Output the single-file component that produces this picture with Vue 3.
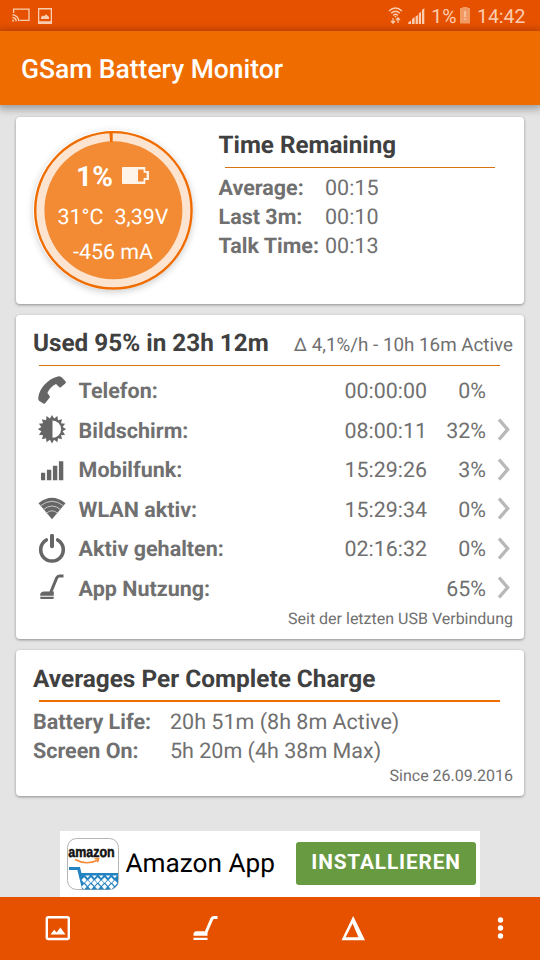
<script setup>
const remaining = [
  { label: 'Average:', value: '00:15' },
  { label: 'Last 3m:', value: '00:10' },
  { label: 'Talk Time:', value: '00:13' },
]
const usage = [
  { icon: 'phone', label: 'Telefon:', time: '00:00:00', pct: '0%', more: false },
  { icon: 'screen', label: 'Bildschirm:', time: '08:00:11', pct: '32%', more: true },
  { icon: 'signal', label: 'Mobilfunk:', time: '15:29:26', pct: '3%', more: true },
  { icon: 'wifi', label: 'WLAN aktiv:', time: '15:29:34', pct: '0%', more: true },
  { icon: 'power', label: 'Aktiv gehalten:', time: '02:16:32', pct: '0%', more: true },
  { icon: 'broom', label: 'App Nutzung:', time: '', pct: '65%', more: true },
]
const averages = [
  { label: 'Battery Life:', value: '20h 51m (8h 8m Active)' },
  { label: 'Screen On:', value: '5h 20m (4h 38m Max)' },
]
const rays = Array.from({ length: 32 }, (_, i) => {
  const r = i % 2 ? 10.8 : 14.2
  const a = (i * Math.PI) / 16
  return `${(14 + r * Math.sin(a)).toFixed(2)},${(14 - r * Math.cos(a)).toFixed(2)}`
}).join(' ')
</script>

<template>
  <div class="screen">
    <div class="status">
      <svg class="cast" width="18" height="15" viewBox="0 0 18 15" fill="none" stroke="#fbcdb0">
        <path d="M1.6 5V1.2H17V12.3H8" stroke-width="1.3" />
        <path d="M.5 6.8a6.7 6.7 0 0 1 6.3 6.5M.5 9.5a4 4 0 0 1 3.7 3.8" stroke-width="1.4" />
        <path d="M.3 11.4a2 2 0 0 1 2 2H.3z" fill="#fbcdb0" stroke="none" />
      </svg>
      <svg class="shot" width="14" height="16" viewBox="0 0 14 16">
        <path fill="#fbcdb0" fill-rule="evenodd" d="M0 0h14v16H0zM1.3 1.4v11.8h11.4V1.4z" />
        <path fill="#fbcdb0" d="M3 11V9l1.7-1.6 1.3.8 2-1.9 1.7 1.5L11 9v2z" />
      </svg>
      <span class="grow"></span>
      <svg class="swifi" width="15" height="17" viewBox="0 0 15 17" fill="none" stroke="#fbcdb0" stroke-width="1.4">
        <path d="M1 4.1Q7.5-2.1 14 4.1M3.2 6.3Q7.5 2.2 11.8 6.3M5.2 8.4Q7.5 6.3 9.8 8.4" />
        <path d="M5 11v5M10 16v-5M3 14l2 2.2L7 14M8 13l2-2.2L12 13" stroke-width="1.2" />
        <circle cx="7.5" cy="9.6" r=".9" fill="#fbcdb0" stroke="none" />
      </svg>
      <svg class="ssig" width="17" height="16" viewBox="0 0 17 16" fill="#fbcdb0">
        <path d="M.3 16v-1.8L3 12.4V16zM4 16v-5l2.6-2V16zM7.6 16V8.6L9.9 7v9zM10.8 16V5.4l2.2-1.6V16zM14 16V1.8L16.3 .2V16z" />
      </svg>
      <span class="sbat-text">1%</span>
      <svg class="sbat" width="10" height="17" viewBox="0 0 10 17">
        <path fill="#f29a64" d="M2.5 1V0h5v1H10v15.5H0V1z" />
        <path fill="#fbcdb0" d="M4.3 4h1.4v6H4.3zM4.3 11.5h1.4V13H4.3z" />
      </svg>
      <span class="clock">14:42</span>
    </div>
    <header class="appbar"><h1>GSam Battery Monitor</h1></header>

    <main class="content">
      <section class="card first">
        <div class="gauge">
          <svg class="dial" width="160" height="160" viewBox="0 0 160 160">
            <circle cx="80.4" cy="80.3" r="78.2" fill="#fce4d0" stroke="#ef6c00" stroke-width="2.4" />
            <circle cx="80.4" cy="80.3" r="69" fill="#f28b34" />
            <path d="M76.3 1.5h3.4V12h-2.600z" fill="#ef6c00" />
          </svg>
          <div class="readout">
            <div class="level">
              <span>1%</span>
              <svg width="27" height="17" viewBox="0 0 27 17">
                <path fill="#fff4ea" fill-rule="evenodd" d="M1 0h22.3v4H27v9h-3.7v4H1a1 1 0 0 1-1-1V1a1 1 0 0 1 1-1zM16 2.6v12h5.6v-3.5h3V5.8h-3V2.6z" />
              </svg>
            </div>
            <div class="temps"><span>31°C</span><span>3,39V</span></div>
            <div class="current">-456 mA</div>
          </div>
        </div>
        <div class="remaining">
          <h2>Time Remaining</h2>
          <div class="rule"></div>
          <div v-for="r in remaining" :key="r.label" class="pair">
            <b>{{ r.label }}</b><span>{{ r.value }}</span>
          </div>
        </div>
      </section>

      <section class="card second">
        <div class="head">
          <h2>Used 95% in 23h 12m</h2>
          <span class="delta">Δ 4,1%/h - 10h 16m Active</span>
        </div>
        <div class="rule"></div>
        <div v-for="u in usage" :key="u.label" class="use">
          <svg class="ico" width="28" height="30" viewBox="0 -.2 28 30">
            <path v-if="u.icon === 'phone'" fill="#666" d="M19.8.3Q22.5-.6 24.2 1.6L27.6 5.2Q28.4 6.4 27.3 7.2L22.8 11Q21.8 11.6 20.8 10.6L18 7.9Q12.5 10.2 9.4 16.9L11.6 19.7Q12.2 20.6 11.5 21.5L7.6 26.6Q6.6 28 5.3 27.2L1 24.5Q0 23.4.3 21.3C1.4 12 9.5 3 19.8.3z" />
            <g v-else-if="u.icon === 'screen'">
              <polygon :points="rays" fill="#666" />
              <path d="M14.500 5.400a8.600 8.600 0 0 1 0 17.200z" fill="#fff" />
            </g>
            <path v-else-if="u.icon === 'signal'" fill="#666" d="M3 17.500h4.200v7.500H3zM8.900 14.500h4.400V25H8.900zM14.900 10.500h4.400V25h-4.400zM20.900 6h4.400V25h-4.400z" />
            <g v-else-if="u.icon === 'wifi'">
              <path d="M14 25L.5 9Q14-2 27.500 9z" fill="#666" />
              <path d="M2.500 11.600Q14 2.500 25.500 11.600M5.400 15.300Q14 8.300 22.600 15.300M8.500 18.900Q14 14.300 19.500 18.900" fill="none" stroke="#c8c8c8" stroke-width="1" />
            </g>
            <g v-else-if="u.icon === 'power'" fill="none" stroke="#666" stroke-linecap="round">
              <path d="M8.300 5.800a11.300 11.300 0 1 0 11.400 0" stroke-width="3.600" />
              <path d="M14 1.500v10.500" stroke-width="4" />
            </g>
            <g v-else>
              <path d="M12.800 19L18.800 4.500Q19.700 2.700 21.500 2.700H25.500" fill="none" stroke="#666" stroke-width="3" />
              <path d="M2.200 22.600V21Q3 18.200 6 18.200H15.800V22.600zM2.200 23.500H15.800V24.800Q15.600 25.800 14.600 25.800H3.400Q2.200 25.700 2.200 24.800z" fill="#666" />
            </g>
          </svg>
          <b>{{ u.label }}</b>
          <span class="time">{{ u.time }}</span>
          <span class="pct">{{ u.pct }}</span>
          <svg v-if="u.more" class="chev" width="14" height="24" viewBox="0 0 14 24">
            <path d="M2 1.500L10.600 11.500L2 21.500" fill="none" stroke="#b8b8b8" stroke-width="3.400" />
          </svg>
        </div>
        <div class="note">Seit der letzten USB Verbindung</div>
      </section>

      <section class="card third">
        <h2>Averages Per Complete Charge</h2>
        <div class="rule thick"></div>
        <div v-for="a in averages" :key="a.label" class="pair">
          <b>{{ a.label }}</b><span>{{ a.value }}</span>
        </div>
        <div class="note">Since 26.09.2016</div>
      </section>
    </main>

    <aside class="ad">
      <svg class="store" width="52" height="52" viewBox="0 0 52 52">
        <defs>
          <clipPath id="tile"><rect x=".5" y=".5" width="51" height="51" rx="9" /></clipPath>
        </defs>
        <rect x=".5" y=".5" width="51" height="51" rx="9" fill="#fff" stroke="#b5b5b5" />
        <text x="1.500" y="19" transform="scale(.83 1)" class="brand">amazon</text>
        <path d="M8 21.500Q19 27.500 30.500 22.200M27.700 20.700L31.600 20.300L30.600 24.200" fill="none" stroke="#f58a35" stroke-width="1.500" />
        <g clip-path="url(#tile)">
          <path d="M2 30.500H11.700L16.700 51" fill="none" stroke="#2484c2" stroke-width="3.200" />
          <path d="M13 35H51V52H16.500z" fill="#2484c2" />
          <g fill="#fff">
            <path v-for="n in 5" :key="'a' + n" :d="`M${11.5 + n * 6.8} 37.500h4.600l-2.300 2.600z`" />
            <path v-for="n in 5" :key="'b' + n" :d="`M${10.3 + n * 6.8} 39.300l2.600 2.800l-2.600 2.800l-2.600-2.800z`" />
            <path v-for="n in 5" :key="'c' + n" :d="`M${13.8 + n * 6.8} 42.300l2.600 2.800l-2.600 2.800l-2.600-2.800z`" />
            <path v-for="n in 5" :key="'d' + n" :d="`M${10.3 + n * 6.8} 46l2.600 2.800l-2.600 2.800l-2.600-2.800z`" />
          </g>
        </g>
      </svg>
      <span class="ad-name">Amazon App</span>
      <button class="install">INSTALLIEREN</button>
    </aside>

    <nav class="tabs">
      <svg width="26" height="26" viewBox="0 0 26 26">
        <rect x="1.800" y="2.200" width="22" height="21.800" rx="1.500" fill="none" stroke="#fff" stroke-width="2.400" />
        <path d="M5.500 19.500L9.200 14.800L11.600 17.400L15.400 12.600L20.500 19.500z" fill="#fff" />
      </svg>
      <svg width="26" height="26" viewBox="0 0 26 26">
        <path d="M13.200 17L18.800 4Q19.500 2.600 21 2.600H24.500" fill="none" stroke="#fff" stroke-width="3" />
        <path d="M.5 20.700V18.500Q1 16.300 3.500 16.300H14.500V20.700zM.5 22.800H14.500V25H.5z" fill="#fff" />
      </svg>
      <svg width="26" height="26" viewBox="0 0 26 26">
        <path fill="#fff" fill-rule="evenodd" d="M13.200 1L25 25.200H1.500zM12.600 8.400L5.700 22.300H18.500z" />
      </svg>
      <svg width="26" height="26" viewBox="0 0 26 26" fill="#fff">
        <circle cx="12.500" cy="5" r="2.700" /><circle cx="12.500" cy="13" r="2.700" /><circle cx="12.500" cy="21" r="2.700" />
      </svg>
    </nav>
  </div>
</template>

<style>
body { margin: 0; background: #e4e4e4; }
</style>

<style scoped>
* { box-sizing: border-box; }
.screen {
  width: 540px; height: 960px; overflow: hidden; display: flex; flex-direction: column;
  background: #e4e4e4; font-family: Roboto, sans-serif; font-size: 21.5px; color: #707070;
  white-space: nowrap; text-rendering: geometricPrecision;
}
.status { height: 31px; background: #e65100; display: flex; align-items: center; padding: 0 14.5px 0 12px; color: #fbcdb0; font-size: 19.5px; }
.grow { flex: 1; }
.shot { margin-left: 8px; }
.ssig { margin-left: 5px; }
.sbat-text { margin-left: 6px; line-height: 31px; padding-top: 1px; }
.sbat { margin-left: 4px; }
.clock { margin-left: 6.5px; line-height: 31px; padding-top: 1px; }
.appbar { height: 74px; background: #ef6c00; display: flex; align-items: center; padding: 2px 21px 0; box-shadow: 0 2px 8px 2px rgba(0, 0, 0, .32); }
h1 { margin: 0; font-size: 26.45px; font-weight: 500; color: #fff; }
.content { display: flex; flex-direction: column; gap: 11px; padding: 12px 16px 0; height: 726px; }
.card { background: #fff; border-radius: 4px; box-shadow: 0 1px 3px rgba(0, 0, 0, .38); }
h2 { margin: 0; font-size: 24.4px; font-weight: 700; color: #404040; line-height: 30px; height: 30px; }
b { font-weight: 700; }
.rule { height: 1px; background: #d8730f; }
.first { height: 187px; display: flex; padding: 13px 0 0 17px; }
.first h2 { font-size: 24.2px; }
.gauge { width: 160px; height: 160px; display: grid; border-radius: 50%; box-shadow: 0 2px 7px rgba(0, 0, 0, .2); }
.dial, .readout { grid-area: 1 / 1; }
.readout { color: #fff; display: flex; flex-direction: column; align-items: center; padding-top: 29px; font-size: 21.4px; }
.level { display: flex; align-items: center; gap: 9px; height: 34px; font-weight: 700; font-size: 28px; padding-right: 1px; }
.level svg { margin-bottom: 1px; }
.temps { display: flex; gap: 11px; height: 36px; line-height: 49px; }
.current { height: 36px; line-height: 47px; }
.remaining { margin-left: 25.5px; width: 280px; }
.remaining .rule { width: 270px; margin: 7px 0 6px 6.5px; }
.pair { display: flex; height: 29px; line-height: 29px; }
.remaining .pair b { width: 106.5px; }
.second { height: 324px; padding-top: 13px; }
.head { display: flex; justify-content: space-between; height: 30px; padding: 0 11px 0 17px; }
.head h2 { font-size: 24.3px; }
.delta { font-size: 18.8px; line-height: 34px; }
.second .rule, .third .rule { width: 461px; margin: 7px 0 5px 23px; }
.use { display: grid; grid-template-columns: 40.6px 200px 1fr 59px 11px 14px; align-items: center; height: 39.5px; padding: 0 13px 0 22px; }
.use b, .time, .pct { padding-top: 2px; }
.time, .pct { text-align: right; font-size: 21.4px; }
.chev { grid-column: 6; }
.note { font-size: 16px; text-align: right; padding-right: 11px; line-height: 21px; }
.third { height: 146px; padding-top: 14px; }
.third h2, .third .pair { padding-left: 17px; }
.third .rule.thick { height: 2px; background: #ef6c00; margin-top: 6px; margin-bottom: 6px; }
.third .pair b { width: 137px; }
.third .note { margin-top: -1px; }
.ad { width: 420px; height: 66px; margin-left: 60px; background: #fff; display: flex; align-items: center; padding: 0 4px 1px 7px; }
.brand { font: 700 15px "Liberation Sans", sans-serif; fill: #111; stroke: #111; stroke-width: .5px; }
.ad-name { font-size: 26.2px; color: #000; margin-left: 6.5px; flex: 1; }
.install { width: 180px; height: 43px; border: 0; padding: 0 0 4px; border-radius: 3px; background: #689a41; color: #fff; font: 700 20.8px Roboto, sans-serif; letter-spacing: .85px; }
.tabs { height: 63px; background: #e65100; display: flex; justify-content: space-between; align-items: center; padding: 0 26px 2px 45px; }
</style>
